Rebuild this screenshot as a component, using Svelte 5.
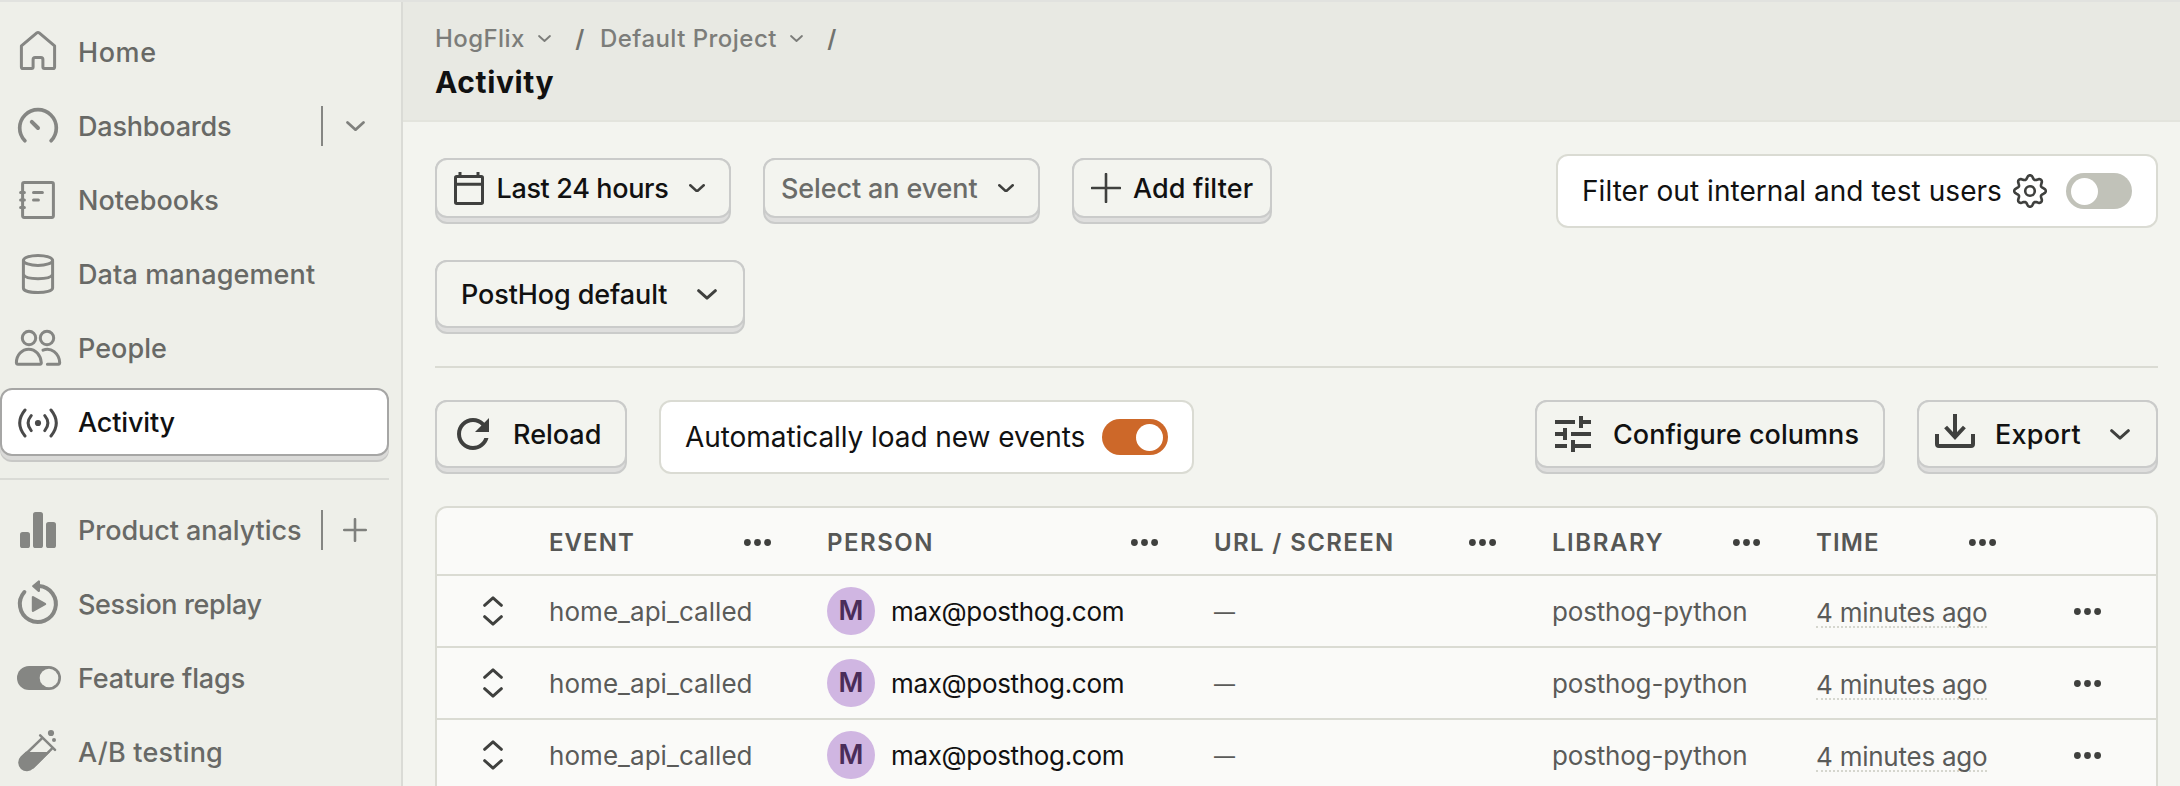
<script>
  const primary = [
    { icon: 'home', label: 'Home', ls: 0.6 },
    { icon: 'dash', label: 'Dashboards', ls: -0.2, action: 'chevron' },
    { icon: 'notebook', label: 'Notebooks', ls: 0.05 },
    { icon: 'data', label: 'Data management', ls: 0.12 },
    { icon: 'people', label: 'People', ls: 0.05 },
    { icon: 'activity', label: 'Activity', ls: -0.15, active: true }
  ];
  const products = [
    { icon: 'bars', label: 'Product analytics', ls: -0.06, action: 'plus' },
    { icon: 'replay', label: 'Session replay', ls: -0.36 },
    { icon: 'flag', label: 'Feature flags', ls: -0.1 },
    { icon: 'tube', label: 'A/B testing', ls: 0.2 }
  ];
  const crumbs = [
    { label: 'HogFlix', ls: 0.42 },
    { label: 'Default Project', ls: 0.46 }
  ];
  const columns = [
    { label: 'EVENT', ls: 1.06 },
    { label: 'PERSON', ls: 1.5 },
    { label: 'URL / SCREEN', ls: 1.36 },
    { label: 'LIBRARY', ls: 1.55 },
    { label: 'TIME', ls: 1.1 }
  ];
  const events = [1, 2, 3].map((id) => ({
    id,
    event: 'home_api_called',
    person: 'max@posthog.com',
    url: '—',
    library: 'posthog-python',
    time: '4 minutes ago'
  }));

  // Outline of the settings cog: a circle with eight rounded teeth.
  const cog =
    Array.from({ length: 97 }, (_, i) => {
      const a = (i / 96) * Math.PI * 2;
      const w = Math.cos(8 * a);
      const r = 13.9 + 1.9 * Math.sign(w) * Math.pow(Math.abs(w), 0.8);
      return `${i ? 'L' : 'M'}${(17 + r * Math.sin(a)).toFixed(2)} ${(17 - r * Math.cos(a)).toFixed(2)}`;
    }).join('') + 'Z';
</script>

{#snippet chevron(w)}
  <svg class="chev" style:width="{w}px" viewBox="0 0 20 11">
    <path d="M1.6 1.6 L10 9.2 L18.4 1.6" />
  </svg>
{/snippet}

{#snippet dots()}
  <svg class="dots" viewBox="0 0 27 7"><circle cx="3.4" cy="3.5" r="3.4" /><circle cx="13.5" cy="3.5" r="3.4" /><circle cx="23.6" cy="3.5" r="3.4" /></svg>
{/snippet}

{#snippet navIcon(name)}
  <svg class="nicon" viewBox="0 0 48 48">
    {#if name === 'home'}
      <path d="M22.8 4.9 Q24 4 25.2 4.9 L40.6 17.8 V38.9 Q40.6 40.5 39 40.5 H30.4 Q28.9 40.5 28.9 39 V31.4 Q28.9 29.4 26.9 29.4 H21.1 Q19.1 29.4 19.1 31.4 V39 Q19.1 40.5 17.6 40.5 H9 Q7.4 40.5 7.4 38.9 V17.8 Z" />
    {:else if name === 'dash'}
      <path class="w35" d="M10.9 38.8 A18.3 18.3 0 1 1 37.1 38.8" />
      <path class="w4" d="M17.8 19.8 L24 26" />
    {:else if name === 'notebook'}
      <rect x="8.6" y="6.6" width="30.8" height="34.8" rx="1.6" />
      <path d="M6.6 16.4 H10.4 M6.6 24 H10.4 M6.6 31.6 H10.4 M19.5 16.4 H28.4 M19.5 24 H24.4" />
    {:else if name === 'data'}
      <ellipse cx="24" cy="10.4" rx="14.6" ry="5" />
      <path d="M9.4 10.4 V38 C9.4 44 38.6 44 38.6 38 V10.4 M9.4 24.6 C12 30 36 30 38.6 24.6" />
    {:else if name === 'people'}
      <circle cx="15" cy="14" r="6.7" /><circle cx="33" cy="14" r="6.7" />
      <path d="M14.7 25.2 C8 25.2 2.5 31 2.4 38.6 Q2.5 40.2 4 40.2 H26 Q27.4 40.2 27.3 38.6 C26.6 31 21.6 25.2 14.7 25.2 Z" />
      <path d="M29 26.2 C37 22.6 45.2 29.6 45.7 38.6 Q45.6 40.2 44.4 40.2 H33.4" />
    {:else if name === 'activity'}
      <circle class="fill" cx="24" cy="25" r="3.1" />
      <path d="M17.2 17.6 Q11 25 17.2 32.6 M30.8 17.6 Q37 25 30.8 32.6 M11 12 Q0.4 25 11 38 M37 12 Q47.6 25 37 38" />
    {:else if name === 'bars'}
      <g class="fill"><rect x="6" y="26" width="10" height="16" rx="2.6" /><rect x="19" y="6" width="10" height="36" rx="2.6" /><rect x="32" y="16" width="10" height="26" rx="2.6" /></g>
    {:else if name === 'replay'}
      <path class="w4" d="M25 6 A18 18 0 1 1 10.4 12" />
      <path class="fill round" d="M19.4 6.1 L24.8 1.6 V10.8 Z" />
      <path class="fill round" d="M19 17.2 V30.8 L31 24 Z" />
    {:else if name === 'flag'}
      <rect class="fill" x="3" y="12" width="44" height="24" rx="12" /><circle class="hole" cx="35" cy="24" r="9.3" />
    {:else}
      <path class="fill" d="M14.6 24 H36 L19.2 40.6 A8.7 8.7 0 0 1 6.6 28.6 L12 23.4 Z" />
      <path class="w25" d="M26.2 7.4 L41 21.8 M28.4 9.8 L8.6 29 M38.4 20.2 L19 39.4" />
      <circle class="fill" cx="37" cy="5" r="3.1" /><circle class="fill" cx="40" cy="12" r="2" />
    {/if}
  </svg>
{/snippet}

{#snippet nav(items)}
  {#each items as it}
    <li class="item" class:active={it.active}>
      <a href="#top" class="link">
        {@render navIcon(it.icon)}
        <span style:letter-spacing="{it.ls}px">{it.label}</span>
      </a>
      {#if it.action}
        <button class="side" aria-label="Open">
          {#if it.action === 'plus'}
            <svg class="plus" viewBox="0 0 24 24"><path d="M12 1.2 V22.8 M1.2 12 H22.8" /></svg>
          {:else}
            {@render chevron(19)}
          {/if}
        </button>
      {/if}
    </li>
  {/each}
{/snippet}

<div class="app">
  <nav class="sidebar">
    <ul>{@render nav(primary)}</ul>
    <div class="rule"></div>
    <ul>{@render nav(products)}</ul>
  </nav>

  <main>
    <header>
      <div class="crumbs">
        {#each crumbs as c}
          <span style:letter-spacing="{c.ls}px">{c.label}</span>
          {@render chevron(13)}
          <span class="slash">/</span>
        {/each}
      </div>
      <h1>Activity</h1>
    </header>

    <div class="content">
      <div class="bar">
        <button class="btn date"><span class="face">
          <svg class="cal" viewBox="0 0 30 33"><rect x="1.5" y="4.5" width="27" height="27" rx="1.2" /><path d="M1.5 12.2 H28.5 M6 0 V4 M24 0 V4" /></svg>
          <span class="t-date">Last 24 hours</span>{@render chevron(16)}
        </span></button>
        <button class="btn select"><span class="face"><span>Select an event</span>{@render chevron(16)}</span></button>
        <button class="btn add"><span class="face">
          <svg class="plus" viewBox="0 0 30 30"><path d="M15 1 V29 M1 15 H29" /></svg><span>Add filter</span>
        </span></button>
        <div class="box internal">
          <span>Filter out internal and test users</span>
          <svg class="cog" viewBox="0 0 34 34"><path d={cog} /><circle cx="17" cy="17" r="4.8" /></svg>
          <span class="toggle"><i></i></span>
        </div>
      </div>

      <div class="bar">
        <button class="btn tall view"><span class="face"><span>PostHog default</span>{@render chevron(20)}</span></button>
      </div>

      <div class="divider"></div>

      <div class="bar">
        <button class="btn tall reload"><span class="face">
          <svg class="glyph" viewBox="4 4 16 16"><path d="M17.65 6.35C16.2 4.9 14.21 4 12 4c-4.42 0-7.99 3.58-7.99 8s3.57 8 7.99 8c3.73 0 6.84-2.55 7.73-6h-2.08c-.82 2.33-3.04 4-5.65 4-3.31 0-6-2.69-6-6s2.69-6 6-6c1.66 0 3.14.69 4.22 1.78L13 11h7V4l-2.35 2.35z" /></svg>
          <span>Reload</span>
        </span></button>
        <div class="box auto">
          <span>Automatically load new events</span>
          <span class="toggle on"><i></i></span>
        </div>
        <button class="btn tall configure"><span class="face">
          <svg class="glyph" viewBox="3 3 18 18"><path d="M3 17v2h6v-2H3zM3 5v2h10V5H3zm10 16v-2h8v-2h-8v-2h-2v6h2zM7 9v2H3v2h4v2h2V9H7zm14 4v-2H11v2h10zm-6-4h2V7h4V5h-4V3h-2v6z" /></svg>
          <span>Configure columns</span>
        </span></button>
        <button class="btn tall export"><span class="face">
          <svg class="down" viewBox="0 0 40 34"><path d="M2 20 V30 Q2 32 4 32 H36 Q38 32 38 30 V20" /><path d="M20 0 V23 M10.6 13 L20 23 L29.4 13" /></svg>
          <span>Export</span>{@render chevron(20)}
        </span></button>
      </div>

      <div class="table">
        <div class="row head">
          <div></div>
          {#each columns as col}
            <div class="cell"><span style:letter-spacing="{col.ls}px">{col.label}</span>{@render dots()}</div>
          {/each}
          <div></div>
        </div>
        {#each events as e (e.id)}
          <div class="row">
            <div class="expand"><svg viewBox="0 0 20 30"><path d="M1.6 9.4 L10 1.8 L18.4 9.4 M1.6 20.6 L10 28.2 L18.4 20.6" /></svg></div>
            <div class="cell ev">{e.event}</div>
            <div class="cell person"><span class="avatar">M</span><span class="email">{e.person}</span></div>
            <div class="cell dash">{e.url}</div>
            <div class="cell lib">{e.library}</div>
            <div class="cell time"><span>{e.time}</span></div>
            <div class="cell more">{@render dots()}</div>
          </div>
        {/each}
      </div>
    </div>
  </main>
</div>

<style>
  :global(body) { background: #f3f4ef; overflow: hidden; }
  :global(*) { box-sizing: border-box; }

  .app {
    display: flex; height: 786px; overflow: hidden;
    border-top: 2px solid #e1e2df;
    font: 500 27px/34px Inter, sans-serif; color: #111;
  }
  svg { display: block; flex: none; fill: none; stroke: currentColor; stroke-linecap: round; stroke-linejoin: round; }
  button { font: inherit; color: inherit; background: none; border: 0; padding: 0; margin: 0; text-align: left; }
  span { white-space: nowrap; }
  ul { list-style: none; margin: 0; padding: 0; display: flex; flex-direction: column; gap: 6px; }

  .sidebar { flex: none; width: 403px; padding: 16px 12px 0 0; background: #eeefe9; border-right: 2px solid #dadbd6; }
  .rule { height: 2px; margin: 22px 0 16px; background: #dadbd6; }
  .item { display: flex; align-items: center; height: 68px; color: #686966; }
  .link { flex: 1; display: flex; align-items: center; gap: 16px; padding-left: 14px; color: inherit; text-decoration: none; }
  .link span, .face > span { padding-top: 2px; }
  .nicon { width: 48px; height: 48px; color: #858683; stroke-width: 3; }
  .nicon .w25 { stroke-width: 2.5; }
  .nicon .w35 { stroke-width: 3.7; }
  .nicon .w4 { stroke-width: 4; }
  .fill { fill: currentColor; stroke: none; }
  .fill.round { stroke: currentColor; stroke-width: 2.4; }
  .hole { fill: #eeefe9; stroke: none; }
  .side { width: 68px; height: 40px; padding-left: 23px; border-left: 2px solid #858683; color: #7f807d; display: flex; align-items: center; }
  .side .plus { width: 24px; margin-left: -3px; stroke-width: 2.6; }
  .item.active {
    color: #111; background: #fff; border: 2px solid #a6a6a5; border-radius: 12px;
    box-shadow: 0 4px 0 #dadad8, 0 6px 0 #c8c8c6;
  }
  .active .link { padding-left: 12px; }
  .active .nicon { color: #4a4a4a; }

  .chev { stroke-width: 2.9; }

  main { flex: 1; min-width: 0; }
  header { height: 120px; padding: 22px 0 0 32px; background: #e8e9e3; border-bottom: 2px solid #e3e4dd; }
  .crumbs { display: flex; align-items: center; font-size: 24px; line-height: 30px; color: #7c7d7a; }
  .crumbs .chev { margin: 0 24px 0 13.5px; }
  .slash { margin-right: 15.5px; font-weight: 600; color: #72736f; }
  h1 { margin: 10px 0 0; font-size: 30px; line-height: 36px; font-weight: 700; letter-spacing: 0.6px; }

  .content { display: flex; flex-direction: column; gap: 32px; padding: 32px 22px 0 32px; }
  .bar { display: flex; align-items: center; gap: 32px; height: 74px; }
  .divider { height: 2px; background: #dadbd3; }

  .btn { height: 66px; border: 2px solid #cacbca; border-radius: 12px; background: #dededd; }
  .face {
    display: flex; align-items: center; height: 60px; margin: -2px -2px 4px;
    border: 2px solid #cacbca; border-radius: 12px; background: #f3f4ef;
  }
  .btn.tall { height: 74px; }
  .tall .face { height: 68px; }
  .face svg { color: #3f403e; }
  .face .chev { margin-left: auto; }

  .date { width: 296px; }
  .date .face { padding: 0 24px 0 17px; gap: 12.5px; }
  .t-date { letter-spacing: -0.35px; }
  .cal { width: 30px; stroke-width: 3; }
  .select { width: 277px; color: #6b6c69; }
  .select .face { padding: 0 24px 0 16px; letter-spacing: -0.12px; }
  .date .chev, .select .chev { stroke-width: 3.2; }
  .add { width: 200px; }
  .add .face { padding-left: 17px; gap: 12px; letter-spacing: 0.12px; }
  .add .plus { width: 30px; stroke-width: 2.6; }
  .view { width: 310px; }
  .view .face { padding: 0 26px 0 24px; letter-spacing: -0.1px; }
  .reload { width: 192px; }
  .reload .face { padding-left: 20px; gap: 24px; }
  .reload .glyph { width: 32px; }
  .glyph { fill: currentColor; stroke: none; }
  .configure { width: 350px; margin-left: auto; }
  .configure .face { padding-left: 18px; gap: 22px; letter-spacing: 0.05px; }
  .configure .glyph { width: 36px; }
  .export { width: 241px; }
  .export .face { padding: 0 26px 0 16px; gap: 20px; letter-spacing: 0.25px; }
  .down { width: 40px; margin-bottom: 6px; stroke-width: 4; stroke-linecap: butt; stroke-linejoin: miter; }

  .box { display: flex; align-items: center; height: 74px; padding: 0 24px; background: #fff; border: 2px solid #dadbd3; border-radius: 12px; font-size: 28px; font-weight: 400; }
  .internal { width: 602px; margin-left: auto; letter-spacing: 0.05px; }
  .auto { width: 535px; letter-spacing: -0.07px; }
  .cog { width: 34px; margin-left: auto; margin-right: 19px; color: #3f403e; stroke-width: 2.6; }
  .toggle { display: flex; align-items: center; width: 66px; height: 36px; padding: 0 5px; border-radius: 18px; background: #c1c2b9; }
  .toggle i { width: 27px; height: 27px; border-radius: 50%; background: #fff; }
  .toggle.on { margin-left: auto; justify-content: flex-end; background: #cd6829; }

  .table { border: 2px solid #dadbd3; border-radius: 12px 12px 0 0; background: #fafaf8; }
  .row { display: grid; grid-template-columns: 112px 278px 387px 338px 264px 236px 1fr; align-items: center; height: 72px; border-top: 2px solid #dadbd3; font-size: 26px; font-weight: 400; color: #5a5b59; }
  .row.head { height: 66px; border-top: 0; font-size: 24px; font-weight: 600; color: #565755; }
  .head .cell { display: flex; align-items: center; justify-content: space-between; padding-right: 56px; }
  .head .cell span { padding-top: 4px; }
  .head .dots { margin-top: 2px; }
  .dots { width: 27px; height: 7px; fill: #3f403e; stroke: none; }
  .ev, .lib, .email, .dash { padding-top: 2px; }
  .ev { letter-spacing: 0.05px; }
  .lib { letter-spacing: -0.18px; }
  .person { display: flex; align-items: center; gap: 16px; color: #111; letter-spacing: -0.33px; }
  .avatar { display: grid; place-items: center; width: 48px; height: 48px; border-radius: 50%; background: #d0b6e2; color: #4a2d59; font-size: 27px; font-weight: 600; letter-spacing: 0; }
  .dash { font-size: 21px; padding-top: 3px; }
  .time { letter-spacing: -0.24px; }
  .time span { display: inline-block; vertical-align: top; line-height: 27px; padding-top: 5px; border-bottom: 2px dotted #d5d6ce; }
  .more { padding-left: 22px; }
  .expand { padding-left: 46px; color: #3f403e; }
  .expand svg { width: 20px; height: 30px; stroke-width: 2.9; }
</style>
